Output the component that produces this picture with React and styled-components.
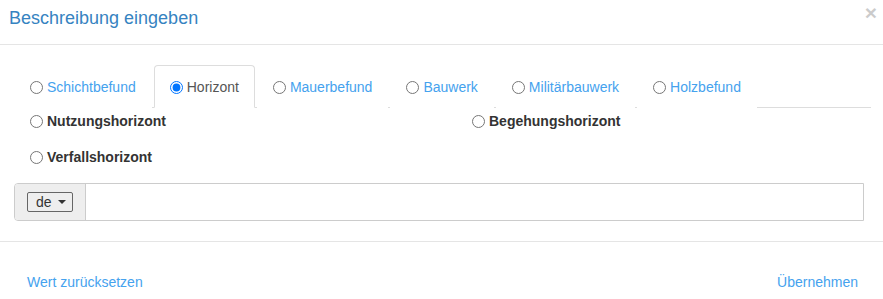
import React, { useState } from 'react'
import styled, { createGlobalStyle } from 'styled-components'

const Global = createGlobalStyle`
  body {
    margin: 0;
    background: #fff;
    font-family: "Liberation Sans", Arial, sans-serif;
    font-size: 14px;
    color: #333;
  }
`

const Modal = styled.div`
  width: 883px;
  height: 299px;
  background: #fff;
`

const Header = styled.div`
  height: 44px;
  border-bottom: 1px solid #e5e5e5;
  display: flex;
  justify-content: space-between;
  align-items: flex-start;
  padding: 0 6px 0 9px;
`

const Title = styled.h4`
  margin: 5px 0 0;
  font-size: 18px;
  font-weight: normal;
  line-height: 26px;
  color: #3683c1;
`

const Close = styled.button`
  border: none;
  background: none;
  padding: 0;
  margin-top: 2px;
  font-family: "Liberation Sans", Arial, sans-serif;
  font-size: 21px;
  font-weight: bold;
  line-height: 1;
  color: #000;
  opacity: 0.2;
`

const Body = styled.div`
  padding: 20px 12px 20px 14px;
`

const Tabs = styled.div`
  display: flex;
  border-bottom: 1px solid #ddd;
`

const Tab = styled.label`
  display: inline-flex;
  align-items: center;
  gap: 4px;
  padding: 11px 15px 10px 15px;
  margin-right: 2px;
  margin-bottom: -1px;
  line-height: 20px;
  border: 1px solid ${p => (p.$active ? '#ddd' : 'transparent')};
  border-bottom-color: ${p => (p.$active ? '#fff' : 'transparent')};
  border-radius: 4px 4px 0 0;
  background: #fff;
  color: ${p => (p.$active ? '#555' : '#45a2ee')};
  cursor: pointer;
`

const Radio = styled.input.attrs({ type: 'radio' })`
  margin: 0;
  width: 13px;
  height: 13px;
`

const Options = styled.div`
  display: grid;
  grid-template-columns: 442px 1fr;
  row-gap: 16px;
  padding: 3px 0 0 16px;
`

const Option = styled.label`
  display: inline-flex;
  align-items: center;
  gap: 4px;
  line-height: 20px;
  font-weight: bold;
  color: #333;
`

const InputGroup = styled.div`
  display: flex;
  width: 850px;
  height: 38px;
  margin-top: 16px;
  box-sizing: border-box;
  border: 1px solid #ccc;
  border-radius: 4px 0 0 4px;
`

const Addon = styled.div`
  display: flex;
  align-items: center;
  width: 71px;
  box-sizing: border-box;
  padding-left: 12px;
  background: #eee;
  border-right: 1px solid #ccc;
  border-radius: 3px 0 0 3px;
`

const LangButton = styled.button`
  display: inline-flex;
  align-items: center;
  gap: 6px;
  height: 20px;
  width: 46px;
  box-sizing: border-box;
  padding: 0 0 0 8px;
  border: 1px solid #666;
  border-radius: 2px;
  background: #eee;
  font-family: "Liberation Sans", Arial, sans-serif;
  font-size: 14px;
  color: #333;
`

const Caret = styled.span`
  width: 0;
  height: 0;
  border-top: 4px solid #333;
  border-left: 4px solid transparent;
  border-right: 4px solid transparent;
`

const TextInput = styled.input`
  flex: 1;
  border: none;
  outline: none;
  padding: 6px 12px;
  font-family: "Liberation Sans", Arial, sans-serif;
  font-size: 14px;
`

const Footer = styled.div`
  border-top: 1px solid #e5e5e5;
  display: flex;
  justify-content: space-between;
  padding: 30px 25px 0 27px;
`

const Link = styled.a`
  color: #45a2ee;
  line-height: 20px;
  text-decoration: none;
  cursor: pointer;
`

const tabs = ['Schichtbefund', 'Horizont', 'Mauerbefund', 'Bauwerk', 'Militärbauwerk', 'Holzbefund']

export default function App() {
  const [active, setActive] = useState('Horizont')
  return (
    <Modal>
      <Global />
      <Header>
        <Title>Beschreibung eingeben</Title>
        <Close>×</Close>
      </Header>
      <Body>
        <Tabs>
          {tabs.map(t => (
            <Tab key={t} $active={t === active}>
              <Radio name="typ" checked={t === active} onChange={() => setActive(t)} />
              {t}
            </Tab>
          ))}
        </Tabs>
        <Options>
          <Option><Radio name="sub" />Nutzungshorizont</Option>
          <Option><Radio name="sub" />Begehungshorizont</Option>
          <Option><Radio name="sub" />Verfallshorizont</Option>
        </Options>
        <InputGroup>
          <Addon>
            <LangButton>de<Caret /></LangButton>
          </Addon>
          <TextInput />
        </InputGroup>
      </Body>
      <Footer>
        <Link>Wert zurücksetzen</Link>
        <Link>Übernehmen</Link>
      </Footer>
    </Modal>
  )
}
